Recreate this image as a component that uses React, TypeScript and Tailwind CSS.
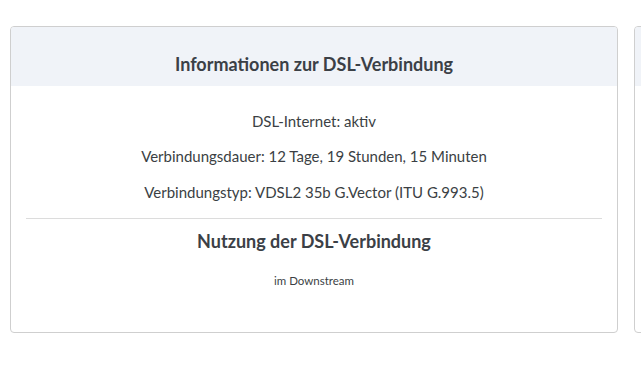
export default function App() {
  return (
    <div className="flex gap-[16px] pt-[26px] pl-[10px] w-[641px] h-[365px] overflow-hidden bg-white" style={{ fontFamily: 'Lato, "Open Sans", sans-serif' }}>
      <div className="shrink-0 w-[608px] h-[307px] border border-[#cfcfcf] rounded-[4px] overflow-hidden flex flex-col">
        <div className="h-[59px] bg-[#f0f3f8] flex justify-center pt-[25px]">
          <h2 className="text-[18px] leading-[24px] font-bold text-[#3b4046]">Informationen zur DSL-Verbindung</h2>
        </div>
        <div className="flex flex-col items-center px-[15px] text-[15px] text-[#3b3f44]">
          <p className="mt-[23px] leading-[24px]">DSL-Internet: aktiv</p>
          <p className="mt-[11px] leading-[24px]">Verbindungsdauer: 12 Tage, 19 Stunden, 15 Minuten</p>
          <p className="mt-[12px] leading-[24px]">Verbindungstyp: VDSL2 35b G.Vector (ITU G.993.5)</p>
          <div className="self-stretch h-px bg-[#dcdcdc] mt-[14px]" />
          <h3 className="mt-[10px] text-[18px] leading-[24px] font-bold text-[#3b4046]">Nutzung der DSL-Verbindung</h3>
          <p className="mt-[20px] text-[11.5px] leading-[16px]">im Downstream</p>
        </div>
      </div>
      <div className="shrink-0 w-[608px] h-[307px] border border-[#cfcfcf] rounded-[4px] overflow-hidden">
        <div className="h-[59px] bg-[#f0f3f8]" />
      </div>
    </div>
  );
}
